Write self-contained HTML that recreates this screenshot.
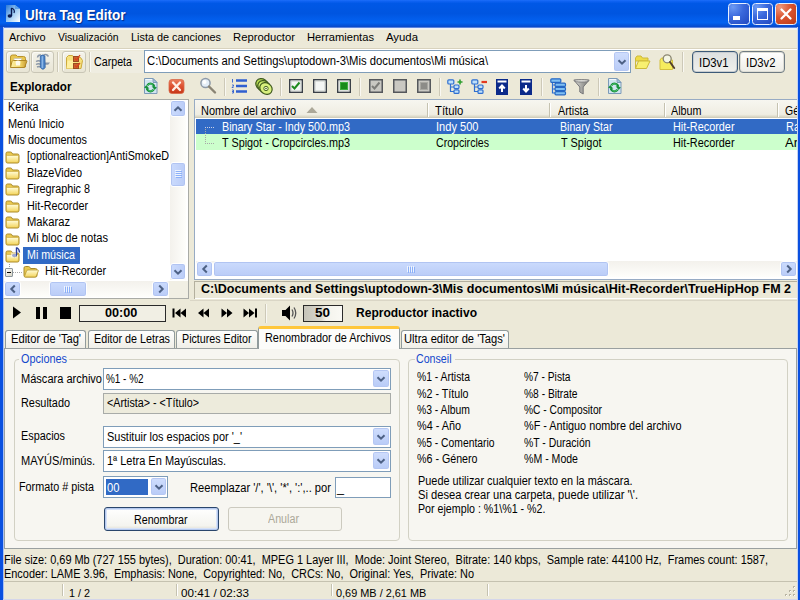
<!DOCTYPE html>
<html lang="es"><head><meta charset="utf-8"><title>Ultra Tag Editor</title>
<style>
html,body{margin:0;padding:0;}
body{width:800px;height:600px;overflow:hidden;background:#ECE9D8;font-family:"Liberation Sans",sans-serif;}
#win{position:relative;width:800px;height:600px;overflow:hidden;background:#ECE9D8;}
#win div,#win svg,#win span.t{position:absolute;box-sizing:border-box;}
span.t{white-space:nowrap;transform-origin:0 50%;font-family:"Liberation Sans",sans-serif;color:#000;}

</style></head>
<body>
<div id="win">
<div style="left:0px;top:0px;width:800px;height:27px;background:linear-gradient(to bottom,#1C6EFA 0%,#0C60F0 6%,#0058E6 13%,#0055E0 50%,#025CEA 68%,#0462F0 84%,#0356E0 91%,#0A48C8 100%);"></div>
<div style="left:0px;top:27px;width:800px;height:1px;background:#5C84DE;"></div>
<div style="left:3px;top:28px;width:795px;height:1px;background:#EEF1FA;"></div>
<div style="left:4px;top:29px;width:793px;height:1px;background:#F3F2EA;"></div>
<div style="left:0px;top:27px;width:3px;height:573px;background:#0A50E0;"></div>
<div style="left:3px;top:27px;width:1px;height:573px;background:#A9C0F2;"></div>
<div style="left:798px;top:27px;width:2px;height:573px;background:#0A50E0;z-index:5;"></div>
<div style="left:797px;top:27px;width:1px;height:573px;background:#C4D2F2;z-index:5;"></div>
<div style="left:3px;top:599px;width:795px;height:1px;background:#D4D6EA;"></div>
<span id="t1" class="t" style="left:25.0px;top:6.83px;font-size:14.5px;line-height:16px;font-weight:bold;color:#fff;transform:scaleX(0.9333);text-shadow:1px 1px 1px #0A2A80;">Ultra Tag Editor</span>
<span id="t2" class="t" style="left:9.0px;top:30.37px;font-size:11.5px;line-height:14px;transform:scaleX(0.9541);">Archivo</span>
<span id="t3" class="t" style="left:58.3px;top:30.37px;font-size:11.5px;line-height:14px;transform:scaleX(0.9040);">Visualización</span>
<span id="t4" class="t" style="left:131.0px;top:30.37px;font-size:11.5px;line-height:14px;transform:scaleX(0.9447);">Lista de canciones</span>
<span id="t5" class="t" style="left:233.0px;top:30.37px;font-size:11.5px;line-height:14px;transform:scaleX(0.9795);">Reproductor</span>
<span id="t6" class="t" style="left:307.0px;top:30.37px;font-size:11.5px;line-height:14px;transform:scaleX(0.9706);">Herramientas</span>
<span id="t7" class="t" style="left:386.0px;top:30.37px;font-size:11.5px;line-height:14px;transform:scaleX(0.9875);">Ayuda</span>
<div style="left:4px;top:48px;width:793px;height:1px;background:#D8D2BD;"></div>
<div style="left:4px;top:49px;width:793px;height:1px;background:#fff;"></div>
<div style="left:91px;top:51px;width:53px;height:22px;background:#EFEDE1;"></div>
<span id="t8" class="t" style="left:93.8px;top:54.62px;font-size:12.5px;line-height:14px;transform:scaleX(0.8542);">Carpeta</span>
<div style="left:144px;top:50px;width:487px;height:23px;background:#fff;border:1px solid #7F9DB9;"></div>
<span id="t9" class="t" style="left:146.8px;top:53.82px;font-size:12.5px;line-height:14px;transform:scaleX(0.9006);">C:\Documents and Settings\uptodown-3\Mis documentos\Mi música\</span>
<span id="t10" class="t" style="left:9.5px;top:80.32px;font-size:12.5px;line-height:14px;font-weight:bold;transform:scaleX(0.9318);">Explorador</span>
<div style="left:3px;top:99px;width:186px;height:200px;background:#fff;border:1px solid #A9ABA6;border-left-color:#C9D6F2;"></div>
<span id="t11" class="t" style="left:7.9px;top:100.22px;font-size:12.5px;line-height:14px;transform:scaleX(0.8635);">Kerika</span>
<span id="t12" class="t" style="left:7.9px;top:116.62px;font-size:12.5px;line-height:14px;transform:scaleX(0.8759);">Menú Inicio</span>
<span id="t13" class="t" style="left:7.9px;top:133.02px;font-size:12.5px;line-height:14px;transform:scaleX(0.8680);">Mis documentos</span>
<span id="t14" class="t" style="left:27.2px;top:149.42px;font-size:12.5px;line-height:14px;transform:scaleX(0.8622);">[optionalreaction]AntiSmokeD</span>
<span id="t15" class="t" style="left:27.2px;top:165.82px;font-size:12.5px;line-height:14px;transform:scaleX(0.8728);">BlazeVideo</span>
<span id="t16" class="t" style="left:27.2px;top:182.22px;font-size:12.5px;line-height:14px;transform:scaleX(0.8636);">Firegraphic 8</span>
<span id="t17" class="t" style="left:27.2px;top:198.62px;font-size:12.5px;line-height:14px;transform:scaleX(0.8609);">Hit-Recorder</span>
<span id="t18" class="t" style="left:27.2px;top:215.02px;font-size:12.5px;line-height:14px;transform:scaleX(0.8970);">Makaraz</span>
<span id="t19" class="t" style="left:27.2px;top:231.42px;font-size:12.5px;line-height:14px;transform:scaleX(0.8898);">Mi bloc de notas</span>
<div style="left:23px;top:247px;width:57px;height:17px;background:#316AC5;"></div>
<span id="t20" class="t" style="left:27.3px;top:248.22px;font-size:12.5px;line-height:14px;color:#fff;transform:scaleX(0.8531);">Mi música</span>
<span id="t21" class="t" style="left:45.3px;top:264.22px;font-size:12.5px;line-height:14px;transform:scaleX(0.8609);">Hit-Recorder</span>
<div style="left:194px;top:99px;width:603px;height:181px;background:#fff;border:1px solid #97ABC4;border-right:none;"></div>
<div style="left:195px;top:100px;width:602px;height:18px;background:linear-gradient(to bottom,#F7F6F0 0%,#EFEDE2 80%,#DCD9C8 92%,#C9C6B4 100%);"></div>
<span id="t22" class="t" style="left:201.3px;top:103.52px;font-size:12.5px;line-height:14px;transform:scaleX(0.8765);">Nombre del archivo</span>
<span id="t23" class="t" style="left:435.0px;top:103.52px;font-size:12.5px;line-height:14px;transform:scaleX(0.9051);">Título</span>
<span id="t24" class="t" style="left:557.6px;top:103.52px;font-size:12.5px;line-height:14px;transform:scaleX(0.8607);">Artista</span>
<span id="t25" class="t" style="left:671.0px;top:103.52px;font-size:12.5px;line-height:14px;transform:scaleX(0.8607);">Album</span>
<span id="t26" class="t" style="left:784.8px;top:103.52px;font-size:12.5px;line-height:14px;transform:scaleX(0.8390);">Gé</span>
<div style="left:196px;top:119px;width:601px;height:15px;background:#316AC5;"></div>
<div style="left:196px;top:134px;width:601px;height:16px;background:#CCFFCC;"></div>
<span id="t27" class="t" style="left:222.3px;top:120.02px;font-size:12.5px;line-height:14px;color:#fff;transform:scaleX(0.8609);">Binary Star - Indy 500.mp3</span>
<span id="t28" class="t" style="left:435.8px;top:120.02px;font-size:12.5px;line-height:14px;color:#fff;transform:scaleX(0.8860);">Indy 500</span>
<span id="t29" class="t" style="left:559.8px;top:120.02px;font-size:12.5px;line-height:14px;color:#fff;transform:scaleX(0.8489);">Binary Star</span>
<span id="t30" class="t" style="left:672.8px;top:120.02px;font-size:12.5px;line-height:14px;color:#fff;transform:scaleX(0.8679);">Hit-Recorder</span>
<span id="t31" class="t" style="left:786.3px;top:120.02px;font-size:12.5px;line-height:14px;color:#fff;transform:scaleX(0.8759);">Ra</span>
<span id="t32" class="t" style="left:222.3px;top:135.52px;font-size:12.5px;line-height:14px;transform:scaleX(0.8663);">T Spigot - Cropcircles.mp3</span>
<span id="t33" class="t" style="left:436.0px;top:135.52px;font-size:12.5px;line-height:14px;transform:scaleX(0.8478);">Cropcircles</span>
<span id="t34" class="t" style="left:560.9px;top:135.52px;font-size:12.5px;line-height:14px;transform:scaleX(0.8742);">T Spigot</span>
<span id="t35" class="t" style="left:672.8px;top:135.52px;font-size:12.5px;line-height:14px;transform:scaleX(0.8679);">Hit-Recorder</span>
<span id="t36" class="t" style="left:785.3px;top:135.52px;font-size:12.5px;line-height:14px;transform:scaleX(1.0400);">Ar</span>
<span id="t37" class="t" style="left:200.5px;top:281.85px;font-size:13px;line-height:14px;font-weight:bold;transform:scaleX(0.9633);">C:\Documents and Settings\uptodown-3\Mis documentos\Mi música\Hit-Recorder\TrueHipHop FM 2</span>
<div style="left:79px;top:305px;width:87px;height:17px;border:1px solid #2A2A2A;background:#F1EFE4;"></div>
<span id="t38" class="t" style="left:105.3px;top:306.42px;font-size:12.5px;line-height:14px;font-weight:bold;transform:scaleX(1.0130);">00:00</span>
<div style="left:303px;top:305px;width:40px;height:17px;border:1px solid #2A2A2A;background:linear-gradient(to right,#C6C4B9 0%,#D9D7CC 45%,#F4F3EC 58%,#FAF9F4 100%);"></div>
<span id="t39" class="t" style="left:315.3px;top:306.42px;font-size:12.5px;line-height:14px;font-weight:bold;transform:scaleX(1.0787);">50</span>
<span id="t40" class="t" style="left:356.0px;top:306.42px;font-size:12.5px;line-height:14px;font-weight:bold;transform:scaleX(0.9625);">Reproductor inactivo</span>
<div style="left:4px;top:348px;width:793px;height:201px;background:#F7F6F1;border:1px solid #9AA0A0;"></div>
<div style="left:5px;top:330px;width:81px;height:18px;background:linear-gradient(to bottom,#FEFEFD,#F0EFE8);border:1px solid #919B9C;border-bottom:none;border-radius:3px 3px 0 0;"></div>
<span id="t41" class="t" style="left:11.3px;top:332.22px;font-size:12.5px;line-height:14px;transform:scaleX(0.8924);">Editor de 'Tag'</span>
<div style="left:88px;top:330px;width:87px;height:18px;background:linear-gradient(to bottom,#FEFEFD,#F0EFE8);border:1px solid #919B9C;border-bottom:none;border-radius:3px 3px 0 0;"></div>
<span id="t42" class="t" style="left:93.8px;top:332.22px;font-size:12.5px;line-height:14px;transform:scaleX(0.8612);">Editor de Letras</span>
<div style="left:176px;top:330px;width:82px;height:18px;background:linear-gradient(to bottom,#FEFEFD,#F0EFE8);border:1px solid #919B9C;border-bottom:none;border-radius:3px 3px 0 0;"></div>
<span id="t43" class="t" style="left:182.3px;top:332.22px;font-size:12.5px;line-height:14px;transform:scaleX(0.8551);">Pictures Editor</span>
<div style="left:401px;top:330px;width:108px;height:18px;background:linear-gradient(to bottom,#FEFEFD,#F0EFE8);border:1px solid #919B9C;border-bottom:none;border-radius:3px 3px 0 0;"></div>
<span id="t44" class="t" style="left:404.3px;top:332.22px;font-size:12.5px;line-height:14px;transform:scaleX(0.8924);">Ultra editor de 'Tags'</span>
<div style="left:258px;top:326px;width:142px;height:23px;background:#FCFCFA;border:1px solid #919B9C;border-bottom:none;border-radius:3px 3px 0 0;border-top:3px solid #FFC73C;"></div>
<span id="t45" class="t" style="left:265.3px;top:331.02px;font-size:12.5px;line-height:14px;transform:scaleX(0.8718);">Renombrador de Archivos</span>
<div style="left:14px;top:359px;width:386px;height:182px;border:1px solid #D2D1C4;border-radius:4px;"></div>
<div style="left:408px;top:359px;width:380px;height:182px;border:1px solid #D2D1C4;border-radius:4px;"></div>
<div style="left:19px;top:352px;width:50px;height:12px;background:#F7F6F1;"></div>
<div style="left:415px;top:352px;width:40px;height:12px;background:#F7F6F1;"></div>
<span id="t46" class="t" style="left:20.5px;top:351.52px;font-size:12.5px;line-height:14px;color:#1448CC;transform:scaleX(0.8710);">Opciones</span>
<span id="t47" class="t" style="left:416.3px;top:351.52px;font-size:12.5px;line-height:14px;color:#1448CC;transform:scaleX(0.8516);">Conseil</span>
<span id="t48" class="t" style="left:20.5px;top:371.52px;font-size:12.5px;line-height:14px;transform:scaleX(0.8833);">Máscara archivo</span>
<div style="left:103px;top:368px;width:288px;height:22px;background:#fff;border:1px solid #7F9DB9;"></div>
<span id="t49" class="t" style="left:106.3px;top:371.52px;font-size:12.5px;line-height:14px;transform:scaleX(0.7937);">%1 - %2</span>
<span id="t50" class="t" style="left:20.5px;top:395.72px;font-size:12.5px;line-height:14px;transform:scaleX(0.8704);">Resultado</span>
<div style="left:103px;top:393px;width:288px;height:21px;background:#EDEBDC;border:1px solid #A8ABA8;"></div>
<span id="t51" class="t" style="left:106.7px;top:396.32px;font-size:12.5px;line-height:14px;transform:scaleX(0.8598);">&lt;Artista&gt; - &lt;Título&gt;</span>
<span id="t52" class="t" style="left:20.5px;top:429.02px;font-size:12.5px;line-height:14px;transform:scaleX(0.8673);">Espacios</span>
<div style="left:103px;top:426px;width:288px;height:22px;background:#fff;border:1px solid #7F9DB9;"></div>
<span id="t53" class="t" style="left:106.9px;top:429.62px;font-size:12.5px;line-height:14px;transform:scaleX(0.8757);">Sustituir los espacios por '_'</span>
<span id="t54" class="t" style="left:20.5px;top:454.02px;font-size:12.5px;line-height:14px;transform:scaleX(0.8828);">MAYÚS/minús.</span>
<div style="left:103px;top:450px;width:288px;height:22px;background:#fff;border:1px solid #7F9DB9;"></div>
<span id="t55" class="t" style="left:107.3px;top:454.02px;font-size:12.5px;line-height:14px;transform:scaleX(0.8799);">1ª Letra En Mayúsculas.</span>
<span id="t56" class="t" style="left:19.3px;top:480.32px;font-size:12.5px;line-height:14px;transform:scaleX(0.8636);">Formato # pista</span>
<div style="left:103px;top:476px;width:65px;height:22px;background:#fff;border:1px solid #7F9DB9;"></div>
<div style="left:106px;top:479px;width:42px;height:16px;background:#316AC5;"></div>
<span id="t57" class="t" style="left:106.8px;top:480.52px;font-size:12.5px;line-height:14px;color:#fff;transform:scaleX(0.8989);">00</span>
<span id="t58" class="t" style="left:190.3px;top:480.52px;font-size:12.5px;line-height:14px;transform:scaleX(0.8921);">Reemplazar '/', '\', '*', ':',.. por</span>
<div style="left:335px;top:477px;width:56px;height:21px;background:#fff;border:1px solid #7F9DB9;"></div>
<span id="t59" class="t" style="left:336.9px;top:480.82px;font-size:12.5px;line-height:14px;transform:scaleX(1.0067);">_</span>
<div style="left:104px;top:507px;width:115px;height:24px;background:linear-gradient(to bottom,#fff,#F4F4EF 80%,#E0DDD2);border:1px solid #2A466C;border-radius:3px;box-shadow:inset 0 0 0 1px #B4C8EE,inset 0 0 0 2px #D6E2F8;"></div>
<span id="t60" class="t" style="left:133.8px;top:512.72px;font-size:12.5px;line-height:14px;transform:scaleX(0.8556);">Renombrar</span>
<div style="left:228px;top:507px;width:114px;height:24px;background:#F6F5EF;border:1px solid #CCCABF;border-radius:3px;"></div>
<span id="t61" class="t" style="left:268.3px;top:512.42px;font-size:12.5px;line-height:14px;color:#ACA899;transform:scaleX(0.8578);">Anular</span>
<span id="t62" class="t" style="left:416.8px;top:370.27px;font-size:12.5px;line-height:14px;transform:scaleX(0.8291);">%1 - Artista</span>
<span id="t63" class="t" style="left:416.8px;top:386.67px;font-size:12.5px;line-height:14px;transform:scaleX(0.8552);">%2 - Título</span>
<span id="t64" class="t" style="left:416.8px;top:403.07px;font-size:12.5px;line-height:14px;transform:scaleX(0.8291);">%3 - Album</span>
<span id="t65" class="t" style="left:416.8px;top:419.47px;font-size:12.5px;line-height:14px;transform:scaleX(0.8673);">%4 - Año</span>
<span id="t66" class="t" style="left:416.8px;top:435.87px;font-size:12.5px;line-height:14px;transform:scaleX(0.8263);">%5 - Comentario</span>
<span id="t67" class="t" style="left:416.8px;top:452.27px;font-size:12.5px;line-height:14px;transform:scaleX(0.8536);">%6 - Género</span>
<span id="t68" class="t" style="left:523.8px;top:370.27px;font-size:12.5px;line-height:14px;transform:scaleX(0.8162);">%7 - Pista</span>
<span id="t69" class="t" style="left:523.8px;top:386.67px;font-size:12.5px;line-height:14px;transform:scaleX(0.8191);">%8 - Bitrate</span>
<span id="t70" class="t" style="left:523.8px;top:403.07px;font-size:12.5px;line-height:14px;transform:scaleX(0.8196);">%C - Compositor</span>
<span id="t71" class="t" style="left:523.8px;top:419.47px;font-size:12.5px;line-height:14px;transform:scaleX(0.8685);">%F - Antiguo nombre del archivo</span>
<span id="t72" class="t" style="left:523.8px;top:435.87px;font-size:12.5px;line-height:14px;transform:scaleX(0.8347);">%T - Duración</span>
<span id="t73" class="t" style="left:523.8px;top:452.27px;font-size:12.5px;line-height:14px;transform:scaleX(0.8450);">%M - Mode</span>
<span id="t74" class="t" style="left:418.3px;top:474.22px;font-size:12.5px;line-height:14px;transform:scaleX(0.8721);">Puede utilizar cualquier texto en la máscara.</span>
<span id="t75" class="t" style="left:418.3px;top:487.92px;font-size:12.5px;line-height:14px;transform:scaleX(0.8922);">Si desea crear una carpeta, puede utilizar '\'.</span>
<span id="t76" class="t" style="left:418.3px;top:501.52px;font-size:12.5px;line-height:14px;transform:scaleX(0.8536);">Por ejemplo : %1\%1 - %2.</span>
<span id="t77" class="t" style="left:4.3px;top:553.22px;font-size:12.5px;line-height:14px;transform:scaleX(0.8748);white-space:pre;">File size: 0,69 Mb (727 155 bytes),  Duration: 00:41,  MPEG 1 Layer III,  Mode: Joint Stereo,  Bitrate: 140 kbps,  Sample rate: 44100 Hz,  Frames count: 1587,</span>
<span id="t78" class="t" style="left:4.3px;top:566.82px;font-size:12.5px;line-height:14px;transform:scaleX(0.8740);white-space:pre;">Encoder: LAME 3.96,  Emphasis: None,  Copyrighted: No,  CRCs: No,  Original: Yes,  Private: No</span>
<div style="left:4px;top:581px;width:793px;height:1px;background:#C5C2B0;"></div>
<span id="t79" class="t" style="left:68.8px;top:585.57px;font-size:11.5px;line-height:14px;transform:scaleX(0.9379);">1 / 2</span>
<span id="t80" class="t" style="left:181.3px;top:585.57px;font-size:11.5px;line-height:14px;transform:scaleX(1.0126);">00:41 / 02:33</span>
<span id="t81" class="t" style="left:336.3px;top:585.57px;font-size:11.5px;line-height:14px;transform:scaleX(0.9480);">0,69 MB / 2,61 MB</span>
<div style="left:62px;top:584px;width:1px;height:12px;background:#C5C2B0;"></div>
<div style="left:63px;top:584px;width:1px;height:12px;background:#fff;"></div>
<div style="left:176px;top:584px;width:1px;height:12px;background:#C5C2B0;"></div>
<div style="left:177px;top:584px;width:1px;height:12px;background:#fff;"></div>
<div style="left:331px;top:584px;width:1px;height:12px;background:#C5C2B0;"></div>
<div style="left:332px;top:584px;width:1px;height:12px;background:#fff;"></div>
<div style="left:487px;top:584px;width:1px;height:12px;background:#C5C2B0;"></div>
<div style="left:488px;top:584px;width:1px;height:12px;background:#fff;"></div>
<div style="left:170px;top:100px;width:16px;height:180px;background:linear-gradient(to right,#F3F1EC,#FEFEFB);"></div>
<div style="left:170px;top:100px;width:16px;height:17px;background:linear-gradient(to right,#CBDBFD,#BACCF7);border:1px solid #fff;border-radius:3px;box-shadow:inset 0 0 0 1px #B1C4F2;"></div>
<svg style="left:170px;top:100.5px" width="16" height="16" viewBox="-8 -8 16 16"><polyline points="-3.5,1.8 0,-1.7 3.5,1.8" fill="none" stroke="#4D6185" stroke-width="2"/></svg>
<div style="left:170px;top:263px;width:16px;height:17px;background:linear-gradient(to right,#CBDBFD,#BACCF7);border:1px solid #fff;border-radius:3px;box-shadow:inset 0 0 0 1px #B1C4F2;"></div>
<svg style="left:170px;top:263.5px" width="16" height="16" viewBox="-8 -8 16 16"><polyline points="-3.5,-1.8 0,1.7 3.5,-1.8" fill="none" stroke="#4D6185" stroke-width="2"/></svg>
<div style="left:170px;top:162px;width:16px;height:25px;background:linear-gradient(to right,#CBDBFD,#BACCF7);border:1px solid #fff;border-radius:3px;box-shadow:inset 0 0 0 1px #B1C4F2;"></div>
<div style="left:175px;top:170px;width:6px;height:1px;background:#EEF4FE;"></div>
<div style="left:176px;top:171px;width:6px;height:1px;background:#8CB0F8;"></div>
<div style="left:175px;top:172px;width:6px;height:1px;background:#EEF4FE;"></div>
<div style="left:176px;top:173px;width:6px;height:1px;background:#8CB0F8;"></div>
<div style="left:175px;top:174px;width:6px;height:1px;background:#EEF4FE;"></div>
<div style="left:176px;top:175px;width:6px;height:1px;background:#8CB0F8;"></div>
<div style="left:175px;top:176px;width:6px;height:1px;background:#EEF4FE;"></div>
<div style="left:176px;top:177px;width:6px;height:1px;background:#8CB0F8;"></div>
<div style="left:4px;top:281px;width:165px;height:16px;background:linear-gradient(to bottom,#F3F1EC,#FEFEFB);"></div>
<div style="left:4px;top:281px;width:17px;height:16px;background:linear-gradient(to bottom,#CBDBFD,#BACCF7);border:1px solid #fff;border-radius:3px;box-shadow:inset 0 0 0 1px #B1C4F2;"></div>
<svg style="left:4.5px;top:281px" width="16" height="16" viewBox="-8 -8 16 16"><polyline points="1.8,-3.5 -1.7,0 1.8,3.5" fill="none" stroke="#4D6185" stroke-width="2"/></svg>
<div style="left:152px;top:281px;width:17px;height:16px;background:linear-gradient(to bottom,#CBDBFD,#BACCF7);border:1px solid #fff;border-radius:3px;box-shadow:inset 0 0 0 1px #B1C4F2;"></div>
<svg style="left:152.5px;top:281px" width="16" height="16" viewBox="-8 -8 16 16"><polyline points="-1.8,-3.5 1.7,0 -1.8,3.5" fill="none" stroke="#4D6185" stroke-width="2"/></svg>
<div style="left:49px;top:281px;width:38px;height:16px;background:linear-gradient(to bottom,#CBDBFD,#BACCF7);border:1px solid #fff;border-radius:3px;box-shadow:inset 0 0 0 1px #B1C4F2;"></div>
<div style="left:64px;top:286px;width:1px;height:6px;background:#EEF4FE;"></div>
<div style="left:65px;top:287px;width:1px;height:6px;background:#8CB0F8;"></div>
<div style="left:66px;top:286px;width:1px;height:6px;background:#EEF4FE;"></div>
<div style="left:67px;top:287px;width:1px;height:6px;background:#8CB0F8;"></div>
<div style="left:68px;top:286px;width:1px;height:6px;background:#EEF4FE;"></div>
<div style="left:69px;top:287px;width:1px;height:6px;background:#8CB0F8;"></div>
<div style="left:70px;top:286px;width:1px;height:6px;background:#EEF4FE;"></div>
<div style="left:71px;top:287px;width:1px;height:6px;background:#8CB0F8;"></div>
<div style="left:169px;top:281px;width:19px;height:17px;background:#F1EFE4;"></div>
<div style="left:186px;top:100px;width:2px;height:181px;background:#fff;"></div>
<div style="left:196px;top:261px;width:601px;height:16px;background:linear-gradient(to bottom,#F3F1EC,#FEFEFB);"></div>
<div style="left:196px;top:261px;width:17px;height:16px;background:linear-gradient(to bottom,#CBDBFD,#BACCF7);border:1px solid #fff;border-radius:3px;box-shadow:inset 0 0 0 1px #B1C4F2;"></div>
<svg style="left:196.5px;top:261px" width="16" height="16" viewBox="-8 -8 16 16"><polyline points="1.8,-3.5 -1.7,0 1.8,3.5" fill="none" stroke="#4D6185" stroke-width="2"/></svg>
<div style="left:780px;top:261px;width:17px;height:16px;background:linear-gradient(to bottom,#CBDBFD,#BACCF7);border:1px solid #fff;border-radius:3px;box-shadow:inset 0 0 0 1px #B1C4F2;"></div>
<svg style="left:780.5px;top:261px" width="16" height="16" viewBox="-8 -8 16 16"><polyline points="-1.8,-3.5 1.7,0 -1.8,3.5" fill="none" stroke="#4D6185" stroke-width="2"/></svg>
<div style="left:213px;top:261px;width:396px;height:16px;background:linear-gradient(to bottom,#CBDBFD,#BACCF7);border:1px solid #fff;border-radius:3px;box-shadow:inset 0 0 0 1px #B1C4F2;"></div>
<div style="left:407px;top:266px;width:1px;height:6px;background:#EEF4FE;"></div>
<div style="left:408px;top:267px;width:1px;height:6px;background:#8CB0F8;"></div>
<div style="left:409px;top:266px;width:1px;height:6px;background:#EEF4FE;"></div>
<div style="left:410px;top:267px;width:1px;height:6px;background:#8CB0F8;"></div>
<div style="left:411px;top:266px;width:1px;height:6px;background:#EEF4FE;"></div>
<div style="left:412px;top:267px;width:1px;height:6px;background:#8CB0F8;"></div>
<div style="left:413px;top:266px;width:1px;height:6px;background:#EEF4FE;"></div>
<div style="left:414px;top:267px;width:1px;height:6px;background:#8CB0F8;"></div>
<div style="left:613px;top:51px;width:17px;height:21px;background:linear-gradient(to bottom,#D0DEFD,#B8CBF7);border:1px solid #fff;border-radius:3px;box-shadow:inset 0 0 0 1px #B5C7F3;"></div>
<svg style="left:613.5px;top:54.0px" width="16" height="16" viewBox="-8 -8 16 16"><polyline points="-3.5,-1.8 0,1.7 3.5,-1.8" fill="none" stroke="#4D6185" stroke-width="2"/></svg>
<div style="left:372px;top:369px;width:18px;height:19px;background:linear-gradient(to bottom,#D0DEFD,#B8CBF7);border:1px solid #fff;border-radius:3px;box-shadow:inset 0 0 0 1px #B5C7F3;"></div>
<svg style="left:373.0px;top:371.0px" width="16" height="16" viewBox="-8 -8 16 16"><polyline points="-3.5,-1.8 0,1.7 3.5,-1.8" fill="none" stroke="#4D6185" stroke-width="2"/></svg>
<div style="left:372px;top:427px;width:18px;height:19px;background:linear-gradient(to bottom,#D0DEFD,#B8CBF7);border:1px solid #fff;border-radius:3px;box-shadow:inset 0 0 0 1px #B5C7F3;"></div>
<svg style="left:373.0px;top:429.0px" width="16" height="16" viewBox="-8 -8 16 16"><polyline points="-3.5,-1.8 0,1.7 3.5,-1.8" fill="none" stroke="#4D6185" stroke-width="2"/></svg>
<div style="left:372px;top:451px;width:18px;height:19px;background:linear-gradient(to bottom,#D0DEFD,#B8CBF7);border:1px solid #fff;border-radius:3px;box-shadow:inset 0 0 0 1px #B5C7F3;"></div>
<svg style="left:373.0px;top:453.0px" width="16" height="16" viewBox="-8 -8 16 16"><polyline points="-3.5,-1.8 0,1.7 3.5,-1.8" fill="none" stroke="#4D6185" stroke-width="2"/></svg>
<div style="left:150px;top:477px;width:17px;height:19px;background:linear-gradient(to bottom,#D0DEFD,#B8CBF7);border:1px solid #fff;border-radius:3px;box-shadow:inset 0 0 0 1px #B5C7F3;"></div>
<svg style="left:150.5px;top:479.0px" width="16" height="16" viewBox="-8 -8 16 16"><polyline points="-3.5,-1.8 0,1.7 3.5,-1.8" fill="none" stroke="#4D6185" stroke-width="2"/></svg>
<div style="left:6px;top:51px;width:24px;height:22px;border:1px solid #C9C6B6;border-radius:3px;background:linear-gradient(to bottom,#F4F3EA,#E8E5D5);box-shadow:inset 1px 1px 0 #FBFAF5;"></div>
<div style="left:31px;top:51px;width:23px;height:22px;border:1px solid #C9C6B6;border-radius:3px;background:linear-gradient(to bottom,#F4F3EA,#E8E5D5);box-shadow:inset 1px 1px 0 #FBFAF5;"></div>
<div style="left:62px;top:51px;width:24px;height:22px;border:1px solid #C9C6B6;border-radius:3px;background:linear-gradient(to bottom,#F4F3EA,#E8E5D5);box-shadow:inset 1px 1px 0 #FBFAF5;"></div>
<div style="left:57px;top:52px;width:1px;height:20px;background:#CDC9B8;"></div>
<div style="left:58px;top:52px;width:1px;height:20px;background:#F9F8F2;"></div>
<div style="left:89px;top:52px;width:1px;height:20px;background:#CDC9B8;"></div>
<div style="left:90px;top:52px;width:1px;height:20px;background:#F9F8F2;"></div>
<svg style="left:9px;top:53px" width="20" height="16" viewBox="0 0 20 16">
<defs><linearGradient id="of" x1="0" y1="0" x2="1" y2="0"><stop offset="0" stop-color="#FFF2A8"/><stop offset=".6" stop-color="#F2D566"/><stop offset="1" stop-color="#C79A34"/></linearGradient></defs>
<path d="M1.500 4q0-2 2-2h3.500l1.500 1.500h6q2 0 2 2v8.500h-15z" fill="#E8C650" stroke="#B8922C" stroke-width="1"/>
<path d="M5 5.500h7.500v7h-7.500z" fill="#FFFFFF" stroke="#C8C4B0" stroke-width=".8"/>
<path d="M1.500 14.500l1.500-6q.3-1 1.500-1h12.500q1.200 0 .8 1l-2.300 6z" fill="url(#of)" stroke="#B08828" stroke-width="1"/>
<path d="M6.500 8.500q2.500-2 5 0l-.5 4h-4z" fill="#FFFFFF" fill-opacity=".85"/>
</svg>
<svg style="left:34px;top:52px" width="18" height="20" viewBox="0 0 18 20">
<path d="M3.500 5.500q.5-3 3.500-2.500M9.500 3q3-1.500 5 1.500" fill="none" stroke="#8C98A8" stroke-width="1.500"/>
<path d="M2 9.500q2.500-1.500 5 0M2 12.500q2.500-1.500 5 0M3 15q2-1 4 0" fill="none" stroke="#8C98A8" stroke-width="1.400"/>
<path d="M10.500 10.500h5.500l-1.800 2.200h-3.700z" fill="#8C98A8"/>
<path d="M6.300 4q2.200-2 4.600 0l.3 11.500q-2.200 3.500-4.800 0z" fill="#4C84C6" stroke="#2F62A4" stroke-width=".8"/>
<path d="M7.600 4.500q.8-.8 1.600-.2v11.500q-.8.800-1.600 0z" fill="#8AB6E6"/>
</svg>
<svg style="left:65px;top:53px" width="19" height="18" viewBox="0 0 19 18">
<path d="M1.500 4.500l2-2h4l1.500 2h6.500l2 3-1.500 8h-14.500z" fill="#F6E07A" stroke="#CDAA3C" stroke-width="1"/>
<path d="M1.500 15.500l1-8h6v8z" fill="#FFF0A0"/>
<rect x="8.500" y="3.500" width="5" height="5" fill="#C9642C" stroke="#9C4A22" stroke-width="1"/>
<rect x="8.500" y="10.500" width="5" height="5" fill="#C9642C" stroke="#9C4A22" stroke-width="1"/>
<path d="M10 5.500l1.500 1.500 3.500-5M10 12.500l1.500 1.500 3.500-4" fill="none" stroke="#D8421E" stroke-width="1.300"/>
</svg>
<svg style="left:634px;top:54px" width="18" height="17" viewBox="0 0 18 17">
<path d="M1.500 4l1.500-2h4l1.500 2h5.500v3h-12.500z" fill="#EEDC48" stroke="#CDB93A" stroke-width="1"/>
<path d="M1.500 14.500v-10.500" stroke="#CDB93A" stroke-width="1"/>
<path d="M1.500 14.500l3-7.500h11.500l-3.500 7.500z" fill="#F8F070" stroke="#CDB93A" stroke-width="1"/>
</svg>
<svg style="left:658px;top:53px" width="19" height="19" viewBox="0 0 19 19">
<path d="M2 16.500v-9.500l1.500-2h4l1.500 2h5.500v9.500z" fill="#F6EC5E" stroke="#D4C040" stroke-width="1"/>
<circle cx="9.200" cy="5.800" r="4" fill="#F4F6E4" stroke="#8A8670" stroke-width="1.300"/>
<path d="M12 9l4.200 6" stroke="#54402C" stroke-width="2" stroke-linecap="round"/>
</svg>
<div style="left:682px;top:52px;width:1px;height:20px;background:#CDC9B8;"></div>
<div style="left:683px;top:52px;width:1px;height:20px;background:#F9F8F2;"></div>
<div style="left:692px;top:51px;width:46px;height:22px;border:1px solid #3C5A78;border-radius:4px;background:linear-gradient(to bottom,#DDE0E0,#F0F0EC);box-shadow:inset 0 0 0 1px #C8CDD0;"></div>
<div style="left:739px;top:51px;width:46px;height:22px;border:1px solid #6E7A82;border-radius:4px;background:linear-gradient(to bottom,#FFFFFF,#EEEDE6);box-shadow:inset 0 0 0 1px #DDDDD5;"></div>
<span id="t82" class="t" style="left:699.3px;top:56.02px;font-size:12.5px;line-height:14px;transform:scaleX(0.9033);">ID3v1</span>
<span id="t83" class="t" style="left:745.8px;top:56.02px;font-size:12.5px;line-height:14px;transform:scaleX(0.9033);">ID3v2</span>
<svg style="left:143px;top:77px" width="16" height="18" viewBox="0 0 16 18">
<path d="M1.500 1.500h8.500l4 4v11h-12.500z" fill="#D2E5F1" stroke="#7C9AB8" stroke-width="1"/>
<path d="M2.500 2.500h7v3.500h3.500" fill="none" stroke="#F2F8FC" stroke-width="1"/>
<path d="M10 1.500v4h4z" fill="#A9C4DA" stroke="#7C9AB8" stroke-width="1"/>
<path d="M4.390 8.320A3.800 3.800 0 0 1 11.240 9.840" fill="none" stroke="#17913A" stroke-width="2.200"/>
<path d="M11.700 12.900L8.600 9.300 13.900 10.200z" fill="#17913A"/>
<path d="M10.610 12.680A3.800 3.800 0 0 1 3.760 11.160" fill="none" stroke="#17913A" stroke-width="2.200"/>
<path d="M3.300 8.100L6.400 11.700 1.100 10.800z" fill="#17913A"/>
<path d="M5 8A3 3 0 0 1 9.800 8.200M10 13A3 3 0 0 1 5.200 12.800" fill="none" stroke="#5ACB76" stroke-width=".9"/>
</svg>
<svg style="left:606.5px;top:77px" width="16" height="18" viewBox="0 0 16 18">
<path d="M1.500 1.500h8.500l4 4v11h-12.500z" fill="#D2E5F1" stroke="#7C9AB8" stroke-width="1"/>
<path d="M2.500 2.500h7v3.500h3.500" fill="none" stroke="#F2F8FC" stroke-width="1"/>
<path d="M10 1.500v4h4z" fill="#A9C4DA" stroke="#7C9AB8" stroke-width="1"/>
<path d="M4.390 8.320A3.800 3.800 0 0 1 11.240 9.840" fill="none" stroke="#17913A" stroke-width="2.200"/>
<path d="M11.700 12.900L8.600 9.300 13.900 10.200z" fill="#17913A"/>
<path d="M10.610 12.680A3.800 3.800 0 0 1 3.760 11.160" fill="none" stroke="#17913A" stroke-width="2.200"/>
<path d="M3.300 8.100L6.400 11.700 1.100 10.800z" fill="#17913A"/>
<path d="M5 8A3 3 0 0 1 9.800 8.200M10 13A3 3 0 0 1 5.200 12.800" fill="none" stroke="#5ACB76" stroke-width=".9"/>
</svg>
<svg style="left:168px;top:79px" width="17" height="15" viewBox="0 0 17 15">
<defs><linearGradient id="rx" x1="0" y1="0" x2="0" y2="1"><stop offset="0" stop-color="#EB8060"/><stop offset=".45" stop-color="#DE5434"/><stop offset="1" stop-color="#C63618"/></linearGradient></defs>
<rect x="1" y=".5" width="15" height="14" rx="3" fill="url(#rx)" stroke="#D86848" stroke-width=".8"/>
<path d="M5 3.500l7 7.500M12 3.500l-7 7.500" stroke="#FFEFE6" stroke-width="2.300" stroke-linecap="round"/>
</svg>
<svg style="left:199px;top:77px" width="18" height="18" viewBox="0 0 18 18">
<circle cx="6.500" cy="6" r="4.600" fill="#E4EEF8" stroke="#8E9AA8" stroke-width="1.500"/>
<circle cx="5.500" cy="5" r="2" fill="#FFFFFF"/>
<path d="M10 9.500l6 6" stroke="#8A8474" stroke-width="2.400" stroke-linecap="round"/>
</svg>
<div style="left:224px;top:78px;width:1px;height:18px;background:#CDC9B8;"></div>
<div style="left:225px;top:78px;width:1px;height:18px;background:#F9F8F2;"></div>
<svg style="left:231px;top:78px" width="17" height="16" viewBox="0 0 17 16">
<path d="M5 2.500h11M5 8h11M5 13.500h11" stroke="#2F5FD0" stroke-width="2.600"/>
<path d="M1.500 1v3.500M1 7h1.500v1l-1.500 1.500h1.500M1 12h1.500v3h-1.500M1 13.500h1.500" stroke="#2F5FD0" stroke-width=".9" fill="none"/>
</svg>
<svg style="left:254px;top:77px" width="20" height="19" viewBox="0 0 20 19">
<ellipse cx="8" cy="7.500" rx="6.500" ry="5.500" transform="rotate(35 8 7.500)" fill="#B8DB52" stroke="#3F5A1E" stroke-width="1.200"/>
<ellipse cx="10" cy="9.500" rx="6.500" ry="5.500" transform="rotate(35 10 9.500)" fill="#CBE76B" stroke="#3F5A1E" stroke-width="1.200"/>
<ellipse cx="12" cy="11.500" rx="6.500" ry="5.500" transform="rotate(35 12 11.500)" fill="#D9F07E" stroke="#3F5A1E" stroke-width="1.200"/>
<circle cx="12" cy="11.500" r="2.200" fill="#F4F8D0" stroke="#4A6A22" stroke-width="1"/>
<circle cx="12" cy="11.500" r=".8" fill="#3F5A1E"/>
</svg>
<div style="left:280px;top:78px;width:1px;height:18px;background:#CDC9B8;"></div>
<div style="left:281px;top:78px;width:1px;height:18px;background:#F9F8F2;"></div>
<svg style="left:289px;top:79px" width="14" height="14" viewBox="0 0 14 14"><rect x=".75" y=".75" width="12.500" height="12.500" fill="#F4F6F4" stroke="#3A4048" stroke-width="1.500"/><rect x="2" y="2" width="10" height="10" fill="none" stroke="#C8CCC8" stroke-width="1"/><path d="M3 7l2.500 2.500 5-6" fill="none" stroke="#1E8A1E" stroke-width="2"/></svg>
<svg style="left:313px;top:79px" width="14" height="14" viewBox="0 0 14 14"><rect x=".75" y=".75" width="12.500" height="12.500" fill="#F4F6F4" stroke="#3A4048" stroke-width="1.500"/><rect x="2" y="2" width="10" height="10" fill="none" stroke="#C8CCC8" stroke-width="1"/></svg>
<svg style="left:337px;top:79px" width="14" height="14" viewBox="0 0 14 14"><rect x=".75" y=".75" width="12.500" height="12.500" fill="#F4F6F4" stroke="#3A4048" stroke-width="1.500"/><rect x="2" y="2" width="10" height="10" fill="none" stroke="#C8CCC8" stroke-width="1"/><rect x="3.500" y="3.500" width="7" height="7" fill="#1A8A1A" stroke="#3FAE3F" stroke-width="1"/></svg>
<div style="left:359px;top:78px;width:1px;height:18px;background:#CDC9B8;"></div>
<div style="left:360px;top:78px;width:1px;height:18px;background:#F9F8F2;"></div>
<svg style="left:369px;top:79px" width="14" height="14" viewBox="0 0 14 14"><rect x=".75" y=".75" width="12.500" height="12.500" fill="#C9C8C2" stroke="#55585C" stroke-width="1.500"/><path d="M3 7l2.500 2.500 5-6" fill="none" stroke="#7C7C78" stroke-width="2"/></svg>
<svg style="left:392.5px;top:79px" width="14" height="14" viewBox="0 0 14 14"><rect x=".75" y=".75" width="12.500" height="12.500" fill="#C9C8C2" stroke="#55585C" stroke-width="1.500"/></svg>
<svg style="left:416.5px;top:79px" width="14" height="14" viewBox="0 0 14 14"><rect x=".75" y=".75" width="12.500" height="12.500" fill="#C9C8C2" stroke="#55585C" stroke-width="1.500"/><rect x="3.500" y="3.500" width="7" height="7" fill="#8C8C88" stroke="#A8A8A2" stroke-width="1"/></svg>
<div style="left:439px;top:78px;width:1px;height:18px;background:#CDC9B8;"></div>
<div style="left:440px;top:78px;width:1px;height:18px;background:#F9F8F2;"></div>
<svg style="left:446.5px;top:79px" width="17" height="15" viewBox="0 0 17 15">
<path d="M3.500 5v7.500h4M3.500 8h4" fill="none" stroke="#2F6FD0" stroke-width="1.200"/>
<rect x=".8" y=".8" width="6" height="4.200" rx="1" fill="#BFE0FA" stroke="#2F6FD0" stroke-width="1.200"/>
<rect x="7" y="6" width="5" height="3.600" rx="1" fill="#BFE0FA" stroke="#2F6FD0" stroke-width="1.200"/>
<rect x="7" y="10.800" width="5" height="3.600" rx="1" fill="#BFE0FA" stroke="#2F6FD0" stroke-width="1.200"/>
<path d="M10.500 3h5M13 .5v5" stroke="#2E9E2E" stroke-width="1.600"/></svg>
<svg style="left:470.5px;top:79px" width="17" height="15" viewBox="0 0 17 15">
<path d="M3.500 5v7.500h4M3.500 8h4" fill="none" stroke="#2F6FD0" stroke-width="1.200"/>
<rect x=".8" y=".8" width="6" height="4.200" rx="1" fill="#BFE0FA" stroke="#2F6FD0" stroke-width="1.200"/>
<rect x="7" y="6" width="5" height="3.600" rx="1" fill="#BFE0FA" stroke="#2F6FD0" stroke-width="1.200"/>
<rect x="7" y="10.800" width="5" height="3.600" rx="1" fill="#BFE0FA" stroke="#2F6FD0" stroke-width="1.200"/>
<path d="M10.500 3h5.500" stroke="#E23A1E" stroke-width="2.200"/></svg>
<svg style="left:496px;top:79px" width="12" height="16" viewBox="0 0 12 16"><rect x="0" y="0" width="12" height="16" fill="#0B2A8A"/><rect x="1.500" y="1.500" width="9" height="2" fill="#fff"/><path d="M6 13v-5.500M3.200 9.500l2.800-3 2.800 3" fill="none" stroke="#fff" stroke-width="2"/></svg>
<svg style="left:520px;top:79px" width="12" height="16" viewBox="0 0 12 16"><rect x="0" y="0" width="12" height="16" fill="#0B2A8A"/><rect x="1.500" y="1.500" width="9" height="2" fill="#fff"/><path d="M6 6v5.500M3.200 9.500l2.800 3 2.800-3" fill="none" stroke="#fff" stroke-width="2"/></svg>
<div style="left:541px;top:78px;width:1px;height:18px;background:#CDC9B8;"></div>
<div style="left:542px;top:78px;width:1px;height:18px;background:#F9F8F2;"></div>
<svg style="left:550px;top:78px" width="17" height="18" viewBox="0 0 17 18">
<path d="M2.500 4v11h3M2.500 7h3M2.500 11h3" fill="none" stroke="#2F6FD0" stroke-width="1.200"/>
<rect x=".8" y=".8" width="10" height="3.600" rx="1" fill="#7FBFF2" stroke="#2467C4" stroke-width="1.200"/>
<rect x="5" y="5.200" width="10.500" height="3.200" rx="1" fill="#7FBFF2" stroke="#2467C4" stroke-width="1.200"/>
<rect x="5" y="9.400" width="10.500" height="3.200" rx="1" fill="#7FBFF2" stroke="#2467C4" stroke-width="1.200"/>
<rect x="5" y="13.600" width="10.500" height="3.200" rx="1" fill="#7FBFF2" stroke="#2467C4" stroke-width="1.200"/>
</svg>
<svg style="left:573px;top:79px" width="17" height="16" viewBox="0 0 17 16">
<defs><linearGradient id="fn" x1="0" y1="0" x2="1" y2="0"><stop offset="0" stop-color="#E4E4E0"/><stop offset=".5" stop-color="#A8A8A4"/><stop offset="1" stop-color="#787874"/></linearGradient></defs>
<path d="M.8 1h15.400l-6 7v7l-3.400-2v-5z" fill="url(#fn)" stroke="#77777A" stroke-width="1"/>
<ellipse cx="8.500" cy="1.800" rx="7.400" ry="1.300" fill="#D8D8D4" stroke="#77777A" stroke-width=".8"/>
</svg>
<div style="left:598px;top:78px;width:1px;height:18px;background:#CDC9B8;"></div>
<div style="left:599px;top:78px;width:1px;height:18px;background:#F9F8F2;"></div>
<svg style="left:0;top:0" width="0" height="0"><defs><linearGradient id="fg" x1="0" y1="0" x2="0" y2="1"><stop offset="0" stop-color="#FFFCD8"/><stop offset="1" stop-color="#F4D55E"/></linearGradient></defs></svg>
<svg style="left:5px;top:149.5px" width="15" height="14" viewBox="0 0 15 14">
<path d="M1 3.500q0-1.500 1.500-1.500h3q1 0 1.500 1l.5 1h5q1.500 0 1.500 1.500v6q0 1.500-1.500 1.500h-10q-1.500 0-1.500-1.500z" fill="#E9C84E" stroke="#A98A2C" stroke-width="1"/>
<path d="M1.500 6.500q0-1 1-1h10q1 0 1 1v4.500q0 1.500-1.500 1.500h-9q-1.500 0-1.500-1.500z" fill="url(#fg)" stroke="#C6A53A" stroke-width=".6"/>
</svg>
<svg style="left:5px;top:165.89999999999998px" width="15" height="14" viewBox="0 0 15 14">
<path d="M1 3.500q0-1.500 1.500-1.500h3q1 0 1.500 1l.5 1h5q1.500 0 1.500 1.500v6q0 1.500-1.500 1.500h-10q-1.500 0-1.500-1.500z" fill="#E9C84E" stroke="#A98A2C" stroke-width="1"/>
<path d="M1.500 6.500q0-1 1-1h10q1 0 1 1v4.500q0 1.500-1.500 1.500h-9q-1.500 0-1.500-1.500z" fill="url(#fg)" stroke="#C6A53A" stroke-width=".6"/>
</svg>
<svg style="left:5px;top:182.3px" width="15" height="14" viewBox="0 0 15 14">
<path d="M1 3.500q0-1.500 1.500-1.500h3q1 0 1.500 1l.5 1h5q1.500 0 1.500 1.500v6q0 1.500-1.500 1.500h-10q-1.500 0-1.500-1.500z" fill="#E9C84E" stroke="#A98A2C" stroke-width="1"/>
<path d="M1.500 6.500q0-1 1-1h10q1 0 1 1v4.500q0 1.500-1.500 1.500h-9q-1.500 0-1.500-1.500z" fill="url(#fg)" stroke="#C6A53A" stroke-width=".6"/>
</svg>
<svg style="left:5px;top:198.7px" width="15" height="14" viewBox="0 0 15 14">
<path d="M1 3.500q0-1.500 1.500-1.500h3q1 0 1.500 1l.5 1h5q1.500 0 1.500 1.500v6q0 1.500-1.500 1.500h-10q-1.500 0-1.500-1.500z" fill="#E9C84E" stroke="#A98A2C" stroke-width="1"/>
<path d="M1.500 6.500q0-1 1-1h10q1 0 1 1v4.500q0 1.500-1.500 1.500h-9q-1.500 0-1.500-1.500z" fill="url(#fg)" stroke="#C6A53A" stroke-width=".6"/>
</svg>
<svg style="left:5px;top:215.09999999999997px" width="15" height="14" viewBox="0 0 15 14">
<path d="M1 3.500q0-1.500 1.500-1.500h3q1 0 1.500 1l.5 1h5q1.500 0 1.500 1.500v6q0 1.500-1.500 1.500h-10q-1.500 0-1.500-1.500z" fill="#E9C84E" stroke="#A98A2C" stroke-width="1"/>
<path d="M1.500 6.500q0-1 1-1h10q1 0 1 1v4.500q0 1.500-1.500 1.500h-9q-1.500 0-1.500-1.500z" fill="url(#fg)" stroke="#C6A53A" stroke-width=".6"/>
</svg>
<svg style="left:5px;top:231.5px" width="15" height="14" viewBox="0 0 15 14">
<path d="M1 3.500q0-1.500 1.500-1.500h3q1 0 1.500 1l.5 1h5q1.500 0 1.500 1.500v6q0 1.500-1.500 1.500h-10q-1.500 0-1.500-1.500z" fill="#E9C84E" stroke="#A98A2C" stroke-width="1"/>
<path d="M1.500 6.500q0-1 1-1h10q1 0 1 1v4.500q0 1.500-1.500 1.500h-9q-1.500 0-1.500-1.500z" fill="url(#fg)" stroke="#C6A53A" stroke-width=".6"/>
</svg>
<svg style="left:5px;top:248.5px" width="15" height="14" viewBox="0 0 15 14">
<path d="M1 3.500q0-1.500 1.500-1.500h3q1 0 1.500 1l.5 1h5q1.500 0 1.500 1.500v6q0 1.500-1.500 1.500h-10q-1.500 0-1.500-1.500z" fill="#E9C84E" stroke="#A98A2C" stroke-width="1"/>
<path d="M1.500 6.500q0-1 1-1h10q1 0 1 1v4.500q0 1.500-1.500 1.500h-9q-1.500 0-1.500-1.500z" fill="url(#fg)" stroke="#C6A53A" stroke-width=".6"/>
</svg>
<svg style="left:9px;top:246px" width="12" height="13" viewBox="0 0 12 13"><path d="M7.500 1.500v7.500" stroke="#2A3E9A" stroke-width="1.400"/><path d="M7.500 1.500c2 1 3 2.500 3 5" fill="none" stroke="#2A3E9A" stroke-width="1.300"/><ellipse cx="5.500" cy="9.500" rx="2.400" ry="1.800" fill="#2A3E9A"/><path d="M2 6.500h5v5h-5z" fill="#fff" fill-opacity=".55"/></svg>
<div style="left:9px;top:264px;width:1px;height:4px;background:repeating-linear-gradient(to bottom,#9A9A9A 0 1px,transparent 1px 2px);"></div>
<div style="left:13px;top:272px;width:10px;height:1px;background:repeating-linear-gradient(to right,#A8A8A8 0 1px,transparent 1px 2px);"></div>
<div style="left:5px;top:268px;width:8px;height:9px;background:linear-gradient(135deg,#fff,#D8D4C4);border:1px solid #8C969C;border-radius:1px;"></div>
<div style="left:7px;top:272px;width:4px;height:1px;background:#000;"></div>
<svg style="left:23px;top:265px" width="17" height="13" viewBox="0 0 17 13">
<path d="M1 3q0-1.500 1.500-1.500h3q1 0 1.500 1l.5 1h5q1.500 0 1.500 1.500v5.500q0 1.500-1.500 1.500h-10q-1.500 0-1.500-1.500z" fill="#E9C84E" stroke="#A98A2C" stroke-width="1"/>
<path d="M1.500 11.500l2-5.500q.3-1 1.500-1h9.500q1.200 0 .8 1l-2 5q-.4 1-1.500 1h-9.500q-1 0-.8-.5z" fill="url(#fg)" stroke="#B89A34" stroke-width=".8"/>
</svg>
<div style="left:205px;top:127px;width:1px;height:17px;background:repeating-linear-gradient(to bottom,#A8A8A8 0 1px,transparent 1px 2px);"></div>
<div style="left:205px;top:127px;width:10px;height:1px;background:repeating-linear-gradient(to right,#C8D0E8 0 1px,transparent 1px 2px);"></div>
<div style="left:205px;top:143px;width:10px;height:1px;background:repeating-linear-gradient(to right,#A8A8A8 0 1px,transparent 1px 2px);"></div>
<div style="left:427px;top:103px;width:1px;height:14px;background:#C5C2B0;"></div>
<div style="left:428px;top:103px;width:1px;height:14px;background:#fff;"></div>
<div style="left:549px;top:103px;width:1px;height:14px;background:#C5C2B0;"></div>
<div style="left:550px;top:103px;width:1px;height:14px;background:#fff;"></div>
<div style="left:664px;top:103px;width:1px;height:14px;background:#C5C2B0;"></div>
<div style="left:665px;top:103px;width:1px;height:14px;background:#fff;"></div>
<div style="left:777px;top:103px;width:1px;height:14px;background:#C5C2B0;"></div>
<div style="left:778px;top:103px;width:1px;height:14px;background:#fff;"></div>
<svg style="left:306px;top:106px" width="12" height="8" viewBox="0 0 12 8"><path d="M.5 7l5.500-6 5.500 6z" fill="#ACA899"/></svg>
<svg style="left:12px;top:305px" width="12" height="16" viewBox="0 0 12 16"><path d="M1 1.400l8 6.100-8 6.100z" fill="#000"/></svg>
<div style="left:36px;top:307px;width:4px;height:11.5px;background:#000;"></div>
<div style="left:42.5px;top:307px;width:4px;height:11.5px;background:#000;"></div>
<div style="left:60px;top:307px;width:11px;height:11.5px;background:#000;"></div>
<svg style="left:171px;top:306px" width="18" height="14" viewBox="0 0 18 14"><path d="M2.500 2.500v9" stroke="#000" stroke-width="2"/><path d="M9.500 2.500v9l-5.500-4.500zM15 2.500v9l-5.500-4.500z" fill="#000"/></svg>
<svg style="left:196px;top:306px" width="16" height="14" viewBox="0 0 16 14"><path d="M7.500 2.500v9l-5.500-4.500zM13 2.500v9l-5.500-4.500z" fill="#000"/></svg>
<svg style="left:220px;top:306px" width="16" height="14" viewBox="0 0 16 14"><path d="M1.500 2.500v9l5.500-4.500zM7 2.500v9l5.500-4.500z" fill="#000"/></svg>
<svg style="left:242px;top:306px" width="18" height="14" viewBox="0 0 18 14"><path d="M1.500 2.500v9l5.500-4.500zM7 2.500v9l5.500-4.500z" fill="#000"/><path d="M14 2.500v9" stroke="#000" stroke-width="2"/></svg>
<div style="left:265px;top:304px;width:1px;height:19px;background:#CDC9B8;"></div>
<div style="left:266px;top:304px;width:1px;height:19px;background:#F9F8F2;"></div>
<svg style="left:281px;top:304px" width="17" height="18" viewBox="0 0 17 18"><path d="M1 6h3.500l4.500-4.500v15l-4.500-4.500h-3.500z" fill="#000"/><path d="M11 5.500q2 3.500 0 7M13 3.500q3.500 5.500 0 11" fill="none" stroke="#555" stroke-width="1.300"/></svg>
<svg style="left:6px;top:5px" width="15" height="17" viewBox="0 0 15 17">
<defs><linearGradient id="ai" x1="0" y1="0" x2="1" y2="1"><stop offset="0" stop-color="#2A78D8"/><stop offset=".5" stop-color="#9CCBF4"/><stop offset="1" stop-color="#FFFFFF"/></linearGradient></defs>
<path d="M0 0h9l5 4v13h-14z" fill="url(#ai)"/>
<path d="M9 0l5 4h-5z" fill="#5CA0E8"/>
<path d="M5.500 3v8" stroke="#0A1A50" stroke-width="1.400"/><path d="M5.500 3c2.500 1 3.500 2.500 2.500 5" fill="none" stroke="#0A1A50" stroke-width="1.200"/><ellipse cx="3.800" cy="11" rx="2.200" ry="1.700" fill="#0A1A50"/>
</svg>
<div style="left:728px;top:3px;width:22px;height:22px;border:1px solid #E8F0FF;border-radius:3.500px;background:radial-gradient(circle at 20% 15%,#6C9AF4 0%,#3A68DC 45%,#2148C0 100%);"></div>
<div style="left:733px;top:16px;width:7px;height:4px;background:#fff;"></div>
<div style="left:752px;top:3px;width:21px;height:22px;border:1px solid #E8F0FF;border-radius:3.500px;background:radial-gradient(circle at 20% 15%,#6C9AF4 0%,#3A68DC 45%,#2148C0 100%);"></div>
<div style="left:757px;top:8px;width:11px;height:12px;border:1px solid #fff;border-top:3px solid #fff;"></div>
<div style="left:775px;top:3px;width:22px;height:22px;border:1px solid #E8F0FF;border-radius:3.500px;background:radial-gradient(circle at 20% 15%,#F0987C 0%,#DA5430 45%,#BC3A16 100%);"></div>
<svg style="left:779px;top:7px" width="14" height="14" viewBox="0 0 14 14"><path d="M2.500 2.500l9 9M11.500 2.500l-9 9" stroke="#fff" stroke-width="2.300" stroke-linecap="round"/></svg>
<div style="left:793px;top:586px;width:2px;height:2px;background:#B8B4A2;"></div>
<div style="left:794px;top:587px;width:1px;height:1px;background:#fff;"></div>
<div style="left:793px;top:590px;width:2px;height:2px;background:#B8B4A2;"></div>
<div style="left:794px;top:591px;width:1px;height:1px;background:#fff;"></div>
<div style="left:793px;top:594px;width:2px;height:2px;background:#B8B4A2;"></div>
<div style="left:794px;top:595px;width:1px;height:1px;background:#fff;"></div>
<div style="left:789px;top:590px;width:2px;height:2px;background:#B8B4A2;"></div>
<div style="left:790px;top:591px;width:1px;height:1px;background:#fff;"></div>
<div style="left:789px;top:594px;width:2px;height:2px;background:#B8B4A2;"></div>
<div style="left:790px;top:595px;width:1px;height:1px;background:#fff;"></div>
<div style="left:785px;top:594px;width:2px;height:2px;background:#B8B4A2;"></div>
<div style="left:786px;top:595px;width:1px;height:1px;background:#fff;"></div>
<div style="left:194px;top:281px;width:603px;height:1px;background:#B4B09E;"></div>
<div style="left:194px;top:281px;width:1px;height:18px;background:#B4B09E;"></div>
<div style="left:195px;top:298px;width:602px;height:1px;background:#fff;"></div>
<div style="left:190px;top:300px;width:607px;height:1px;background:#DAD6C6;"></div>
</div>
</body></html>
